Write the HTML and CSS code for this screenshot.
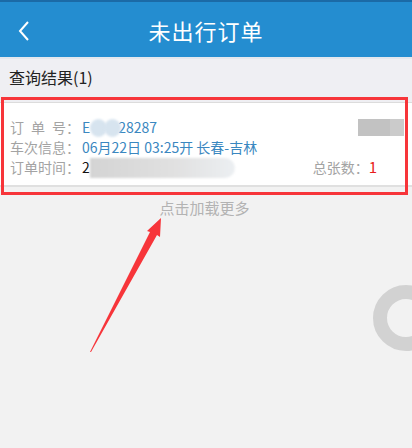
FILE: index.html
```html
<!DOCTYPE html>
<html lang="zh-CN">
<head>
  <meta charset="UTF-8">
  <meta name="viewport" content="width=device-width, initial-scale=1.0">
  <title>未出行订单</title>
  <link rel="stylesheet" href="styles.css">
</head>
<body>
  <div class="status-bar"></div>
  <div class="header">
    <svg class="back" width="14" height="22" viewBox="0 0 14 22"><path d="M11 2 L3 11 L11 20" fill="none" stroke="#fff" stroke-width="2"/></svg>
    <div class="title">未出行订单</div>
  </div>

  <div class="result-title">查询结果(1)</div>

  <!-- order card -->
  <div class="order-card">
    <div class="row">
      <div><span class="label">订单号</span><span class="colon">：</span><span class="value">E<span class="blob"></span><span class="blob"></span>28287</span></div>
      <span class="grey-block"></span>
    </div>
    <div class="row">
      <div><span class="label">车次信息</span><span class="colon">：</span><span class="value">06月22日 03:25开 长春-吉林</span></div>
    </div>
    <div class="row">
      <div><span class="label">订单时间</span><span class="colon">：</span><span class="dark">2</span><span class="blur-long"></span></div>
      <div class="count"><span class="count-label">总张数：</span><span class="count-num">1</span></div>
    </div>
    <div class="mark-box"></div>
  </div>

  <div class="load-more">点击加载更多</div>

  <!-- annotation arrow -->
  <svg class="arrow" width="412" height="448" viewBox="0 0 412 448">
    <polygon points="90,352 150,232 147,231 161,218 160,237 157,235 91,352" fill="#f7353a"/>
  </svg>

  <div class="spinner"><div class="ring"></div></div>
</body>
</html>
```

FILE: styles.css
```css
* {
  margin: 0;
  padding: 0;
  box-sizing: border-box;
}

body {
  width: 412px;
  height: 448px;
  overflow: hidden;
  position: relative;
  background: #f2f2f2;
  font-family: "Noto Sans CJK SC", "Noto Sans", sans-serif;
}

.status-bar {
  height: 2px;
  background: #1b6aa6;
}

.header {
  height: 55px;
  background: #248dd0;
  display: flex;
  align-items: center;
  justify-content: center;
  position: relative;
}

.back {
  position: absolute;
  left: 17px;
  top: 18px;
}

.title {
  color: #fff;
  font-size: 22px;
  letter-spacing: 1px;
}

.result-title {
  background: #efeff3;
  border-top: 2px solid #e4e8ee;
  padding: 5px 9px 0;
  height: 45px;
  font-size: 16px;
  line-height: 26px;
  color: #222;
}

.order-card {
  position: relative;
  background: #fff;
  border-top: 1px solid #dcdcdc;
  border-bottom: 2px solid #e0e0e0;
  padding: 14px 8px 8px 10px;
  font-size: 14px;
}

.row {
  height: 20px;
  line-height: 20px;
  display: flex;
  justify-content: space-between;
  align-items: center;
  white-space: nowrap;
}

.label {
  display: inline-block;
  width: 56px;
  text-align: justify;
  text-align-last: justify;
  color: #a3a3a3;
}

.colon {
  color: #a3a3a3;
  margin-right: 2px;
}

.value {
  color: #3a87c0;
}

.blob {
  display: inline-block;
  width: 17px;
  height: 18px;
  margin-right: -3px;
  border-radius: 50%;
  background: #d7e4ef;
  vertical-align: -4px;
  filter: blur(1px);
}

.grey-block {
  width: 46px;
  height: 17px;
  background: linear-gradient(90deg, #c2c2c2 70%, #cbcbcb 70%);
}

.dark {
  color: #111;
}

.blur-long {
  display: inline-block;
  width: 145px;
  height: 20px;
  vertical-align: -5px;
  border-radius: 0 10px 10px 0;
  background: linear-gradient(90deg, #d4d4d4, #e1e1e1 60%, #eceff2);
  filter: blur(1px);
}

.count {
  margin-right: 27px;
}

.count-label {
  color: #a3a3a3;
}

.count-num {
  color: #e81c1c;
  font-size: 15px;
}

.mark-box {
  position: absolute;
  left: 1px;
  top: -6px;
  width: 407px;
  height: 98px;
  border: 3px solid #f7353a;
}

.load-more {
  text-align: center;
  font-size: 15px;
  line-height: 20px;
  margin-top: 11px;
  margin-right: 3px;
  color: #b3b3b3;
}

.arrow {
  position: absolute;
  left: 0;
  top: 0;
}

.spinner {
  position: absolute;
  left: 373px;
  top: 285px;
  width: 39px;
  height: 66px;
  overflow: hidden;
}

.ring {
  width: 66px;
  height: 66px;
  border-radius: 50%;
  border: 14px solid #d2d2d2;
}
```
